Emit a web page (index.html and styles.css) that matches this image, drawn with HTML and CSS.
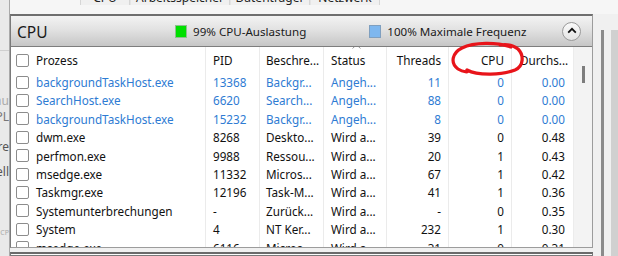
FILE: index.html
```html
<!DOCTYPE html>
<html lang="de">
<head>
<meta charset="utf-8">
<title>Ressourcenmonitor – CPU</title>
<link rel="stylesheet" href="styles.css">
</head>
<body>
<div class="app">
  <div class="sidebar">
    <div class="side-line"></div>
    <span class="frag f1">mu</span>
    <span class="frag f2">PL</span>
    <span class="frag f3">re</span>
    <span class="frag f4">ell</span>
    <span class="frag f5">CP</span>
  </div>
  <div class="main">
    <div class="tabs">
      <div class="tab-spacer"></div>
      <div class="tab t-cpu">CPU</div>
      <div class="tab t-mem">Arbeitsspeicher</div>
      <div class="tab t-disk">Datenträger</div>
      <div class="tab t-net">Netzwerk</div>
    </div>
    <div class="content">
      <div class="column">
        <div class="panel">
          <div class="panel-head">
            <span class="panel-title">CPU</span>
            <span class="legend"><span class="swatch green"></span>99% CPU-Auslastung</span>
            <span class="legend"><span class="swatch blue"></span>100% Maximale Frequenz</span>
            <span class="collapse">
              <svg width="10" height="7" viewBox="0 0 10 7"><path d="M1.2 5.6 L5 1.8 L8.8 5.6" fill="none" stroke="#111" stroke-width="1.8"/></svg>
            </span>
          </div>
          <div class="table-wrap">
            <div class="grid">
              <div class="row head">
                <div class="c c1"><span class="cb"></span>Prozess</div>
                <div class="c c2">PID</div>
                <div class="c c3">Beschre...</div>
                <div class="c c4"><span class="sort">
                  <svg width="9" height="5" viewBox="0 0 9 5"><path d="M0.5 4.5 L4.5 0.8 L8.5 4.5" fill="none" stroke="#9a9a9a" stroke-width="1"/></svg>
                </span>Status</div>
                <div class="c c5 r">Threads</div>
                <div class="c c6 r">CPU</div>
                <div class="c c7">Durchs...</div>
                <div class="c c8"></div>
              </div>
              <div class="row blue">
                <div class="c c1"><span class="cb"></span>backgroundTaskHost.exe</div>
                <div class="c c2">13368</div><div class="c c3">Backgr...</div><div class="c c4">Angeh...</div>
                <div class="c c5 r">11</div><div class="c c6 r">0</div><div class="c c7 r">0.00</div><div class="c c8"></div>
              </div>
              <div class="row blue">
                <div class="c c1"><span class="cb"></span>SearchHost.exe</div>
                <div class="c c2">6620</div><div class="c c3">Search...</div><div class="c c4">Angeh...</div>
                <div class="c c5 r">88</div><div class="c c6 r">0</div><div class="c c7 r">0.00</div><div class="c c8"></div>
              </div>
              <div class="row blue">
                <div class="c c1"><span class="cb"></span>backgroundTaskHost.exe</div>
                <div class="c c2">15232</div><div class="c c3">Backgr...</div><div class="c c4">Angeh...</div>
                <div class="c c5 r">8</div><div class="c c6 r">0</div><div class="c c7 r">0.00</div><div class="c c8"></div>
              </div>
              <div class="row">
                <div class="c c1"><span class="cb"></span>dwm.exe</div>
                <div class="c c2">8268</div><div class="c c3">Deskto...</div><div class="c c4">Wird a...</div>
                <div class="c c5 r">39</div><div class="c c6 r">0</div><div class="c c7 r">0.48</div><div class="c c8"></div>
              </div>
              <div class="row">
                <div class="c c1"><span class="cb"></span>perfmon.exe</div>
                <div class="c c2">9988</div><div class="c c3">Ressou...</div><div class="c c4">Wird a...</div>
                <div class="c c5 r">20</div><div class="c c6 r">1</div><div class="c c7 r">0.43</div><div class="c c8"></div>
              </div>
              <div class="row">
                <div class="c c1"><span class="cb"></span>msedge.exe</div>
                <div class="c c2">11332</div><div class="c c3">Micros...</div><div class="c c4">Wird a...</div>
                <div class="c c5 r">67</div><div class="c c6 r">1</div><div class="c c7 r">0.42</div><div class="c c8"></div>
              </div>
              <div class="row">
                <div class="c c1"><span class="cb"></span>Taskmgr.exe</div>
                <div class="c c2">12196</div><div class="c c3">Task-M...</div><div class="c c4">Wird a...</div>
                <div class="c c5 r">41</div><div class="c c6 r">1</div><div class="c c7 r">0.36</div><div class="c c8"></div>
              </div>
              <div class="row">
                <div class="c c1"><span class="cb"></span>Systemunterbrechungen</div>
                <div class="c c2">-</div><div class="c c3">Zurück...</div><div class="c c4">Wird a...</div>
                <div class="c c5 r">-</div><div class="c c6 r">0</div><div class="c c7 r">0.35</div><div class="c c8"></div>
              </div>
              <div class="row">
                <div class="c c1"><span class="cb"></span>System</div>
                <div class="c c2">4</div><div class="c c3">NT Ker...</div><div class="c c4">Wird a...</div>
                <div class="c c5 r">232</div><div class="c c6 r">1</div><div class="c c7 r">0.30</div><div class="c c8"></div>
              </div>
              <div class="row">
                <div class="c c1"><span class="cb"></span>msedge.exe</div>
                <div class="c c2">6116</div><div class="c c3">Micros...</div><div class="c c4">Wird a...</div>
                <div class="c c5 r">31</div><div class="c c6 r">0</div><div class="c c7 r">0.31</div><div class="c c8"></div>
              </div>
            </div>
            <div class="vthumb"></div>
          </div>
        </div>
        <div class="next-panel"></div>
      </div>
      <div class="outer-scroll">
        <div class="outer-thumb"></div>
      </div>
    </div>
  </div>
  <svg class="annot" width="618" height="256" viewBox="0 0 618 256">
    <path d="M511 47 C497 42 474 42 462 48 C452 53 450 63 458 69 C463 72 470 73 467 70 C478 76 503 75 515 70 C524 66 524 55 518 49 C513 45 506 44 500 45" fill="none" stroke="#e8141a" stroke-width="3.2" stroke-linecap="round" stroke-linejoin="round"/>
  </svg>
</div>
</body>
</html>
```
FILE: styles.css
```css
* { box-sizing: border-box; }
html, body {
  margin: 0;
  padding: 0;
  width: 618px;
  height: 256px;
  overflow: hidden;
  background: #f0f0f0;
  font-family: "Noto Sans", "Open Sans", sans-serif;
  font-size: 11.7px;
  color: #111;
}
.app {
  display: flex;
  height: 256px;
  position: relative;
}
.sidebar {
  width: 10px;
  flex: none;
  position: relative;
  overflow: hidden;
  background: #e9e9e9;
  border-right: 1px solid #a9a9a9;
}
.side-line {
  margin-top: 50px;
  height: 1px;
  background: #cfcfcf;
}
.frag {
  position: absolute;
  right: 0;
  color: #8a8a8a;
  font-size: 12px;
  line-height: 14px;
  white-space: nowrap;
}
.f1 { top: 94px; color: #aaa; }
.f2 { top: 110px; color: #777; }
.f3 { top: 140px; color: #555; }
.f4 { top: 165px; color: #555; }
.f5 { top: 226px; font-size: 7px; color: #aaa; }

.main {
  flex: 1;
  display: flex;
  flex-direction: column;
  min-width: 0;
}
.tabs {
  height: 14px;
  flex: none;
  display: flex;
  background: #f6f6f6;
  overflow: hidden;
}
.tab-spacer { width: 70px; }
.tab {
  height: 14px;
  line-height: 14px;
  margin-top: -9px;
  border-right: 1px solid #d6d6d6;
  border-left: 1px solid #e4e4e4;
  background: #f0f0f0;
  color: #222;
  font-size: 12px;
  text-align: center;
  white-space: nowrap;
}
.t-cpu { width: 50px; border-left: 1px solid #d6d6d6; }
.t-mem { width: 100px; }
.t-disk { width: 80px; }
.t-net { width: 70px; }

.content {
  flex: 1;
  display: flex;
  min-height: 0;
}
.column {
  width: 583px;
  flex: none;
  display: flex;
  flex-direction: column;
}
.panel {
  height: 234px;
  flex: none;
  border: 1px solid #9c9c9c;
  border-top: 2px solid #6f6f6f;
  border-left: 1px solid #7a7a7a;
  background: #fff;
  display: flex;
  flex-direction: column;
}
.panel-head {
  height: 31px;
  flex: none;
  display: flex;
  align-items: center;
  background: linear-gradient(#f3f3f3, #e2e2e2 45%, #c6c6c6);
  border-bottom: 1px solid #7d7d7d;
  padding-left: 6px;
}
.panel-title {
  font-size: 15.5px;
  color: #1a1a1a;
  width: 158px;
  margin-top: 1px;
}
.legend {
  display: flex;
  align-items: center;
  color: #1a1a1a;
  font-size: 11.6px;
  margin-top: 1px;
}
.legend + .legend { margin-left: 63px; }
.swatch {
  width: 12px;
  height: 13px;
  margin-right: 6px;
  border: 1px solid #9a9a9a;
}
.swatch.green { background: #00e000; border-color: #8fbf8f; }
.swatch.blue { background: #7eb7ef; border-color: #7f9fbf; }
.collapse {
  margin-left: auto;
  margin-right: 11px;
  width: 19px;
  height: 19px;
  border-radius: 50%;
  border: 1px solid #9a9a9a;
  background: linear-gradient(#fafafa, #e4e4e4);
  display: flex;
  align-items: center;
  justify-content: center;
}
.collapse svg { display: block; margin-top: -1px; }

.table-wrap {
  flex: 1;
  position: relative;
  overflow: hidden;
}
.grid {
  display: flex;
  flex-direction: column;
}
.row {
  display: grid;
  grid-template-columns: 194px 54px 64px 63px 62px 63px 62px 19px;
  height: 18.4px;
  line-height: 18.4px;
  white-space: nowrap;
}
.row.head { height: 26px; line-height: 27px; }
.row.blue { color: #2e7bd3; }
.c {
  overflow: hidden;
  padding-left: 7px;
  padding-right: 7px;
  border-left: 1px solid #ebebeb;
  position: relative;
}
.c.r { text-align: right; }
.c1 {
  border-left: none;
  padding-left: 5px;
  display: flex;
  align-items: center;
}
.c3 { padding-left: 6px; }
.c7 { padding-right: 8px; padding-left: 8px; }
.c8 { background: #f3f3f3; border-left: 1px solid #ececec; padding: 0; }
.cb {
  width: 13px;
  height: 13px;
  border: 1px solid #8c8c8c;
  border-radius: 2px;
  background: #fff;
  margin-right: 7px;
  flex: none;
}
.sort {
  position: absolute;
  left: 28px;
  top: -3px;
  line-height: 0;
}
.vthumb {
  position: absolute;
  left: 571px;
  top: 19px;
  width: 3px;
  height: 17px;
  background: #7d7d7d;
}
.annot {
  position: absolute;
  left: 0;
  top: 0;
  pointer-events: none;
}
.next-panel {
  margin-top: 4px;
  flex: 1;
  border: 1px solid #7a7a7a;
  border-top: 2px solid #6a6a6a;
  background: #fbfbfb;
}
.outer-scroll {
  flex: 1;
  display: flex;
  padding-left: 8px;
  border-right: 6px solid #f0f0f0;
}
.outer-thumb {
  margin-top: 16px;
  width: 3px;
  background: #8b8b8b;
  border-right: 7px solid #f0f0f0;
  box-sizing: content-box;
  box-shadow: 9px 0 0 0 #d0d0d0;
}
```
